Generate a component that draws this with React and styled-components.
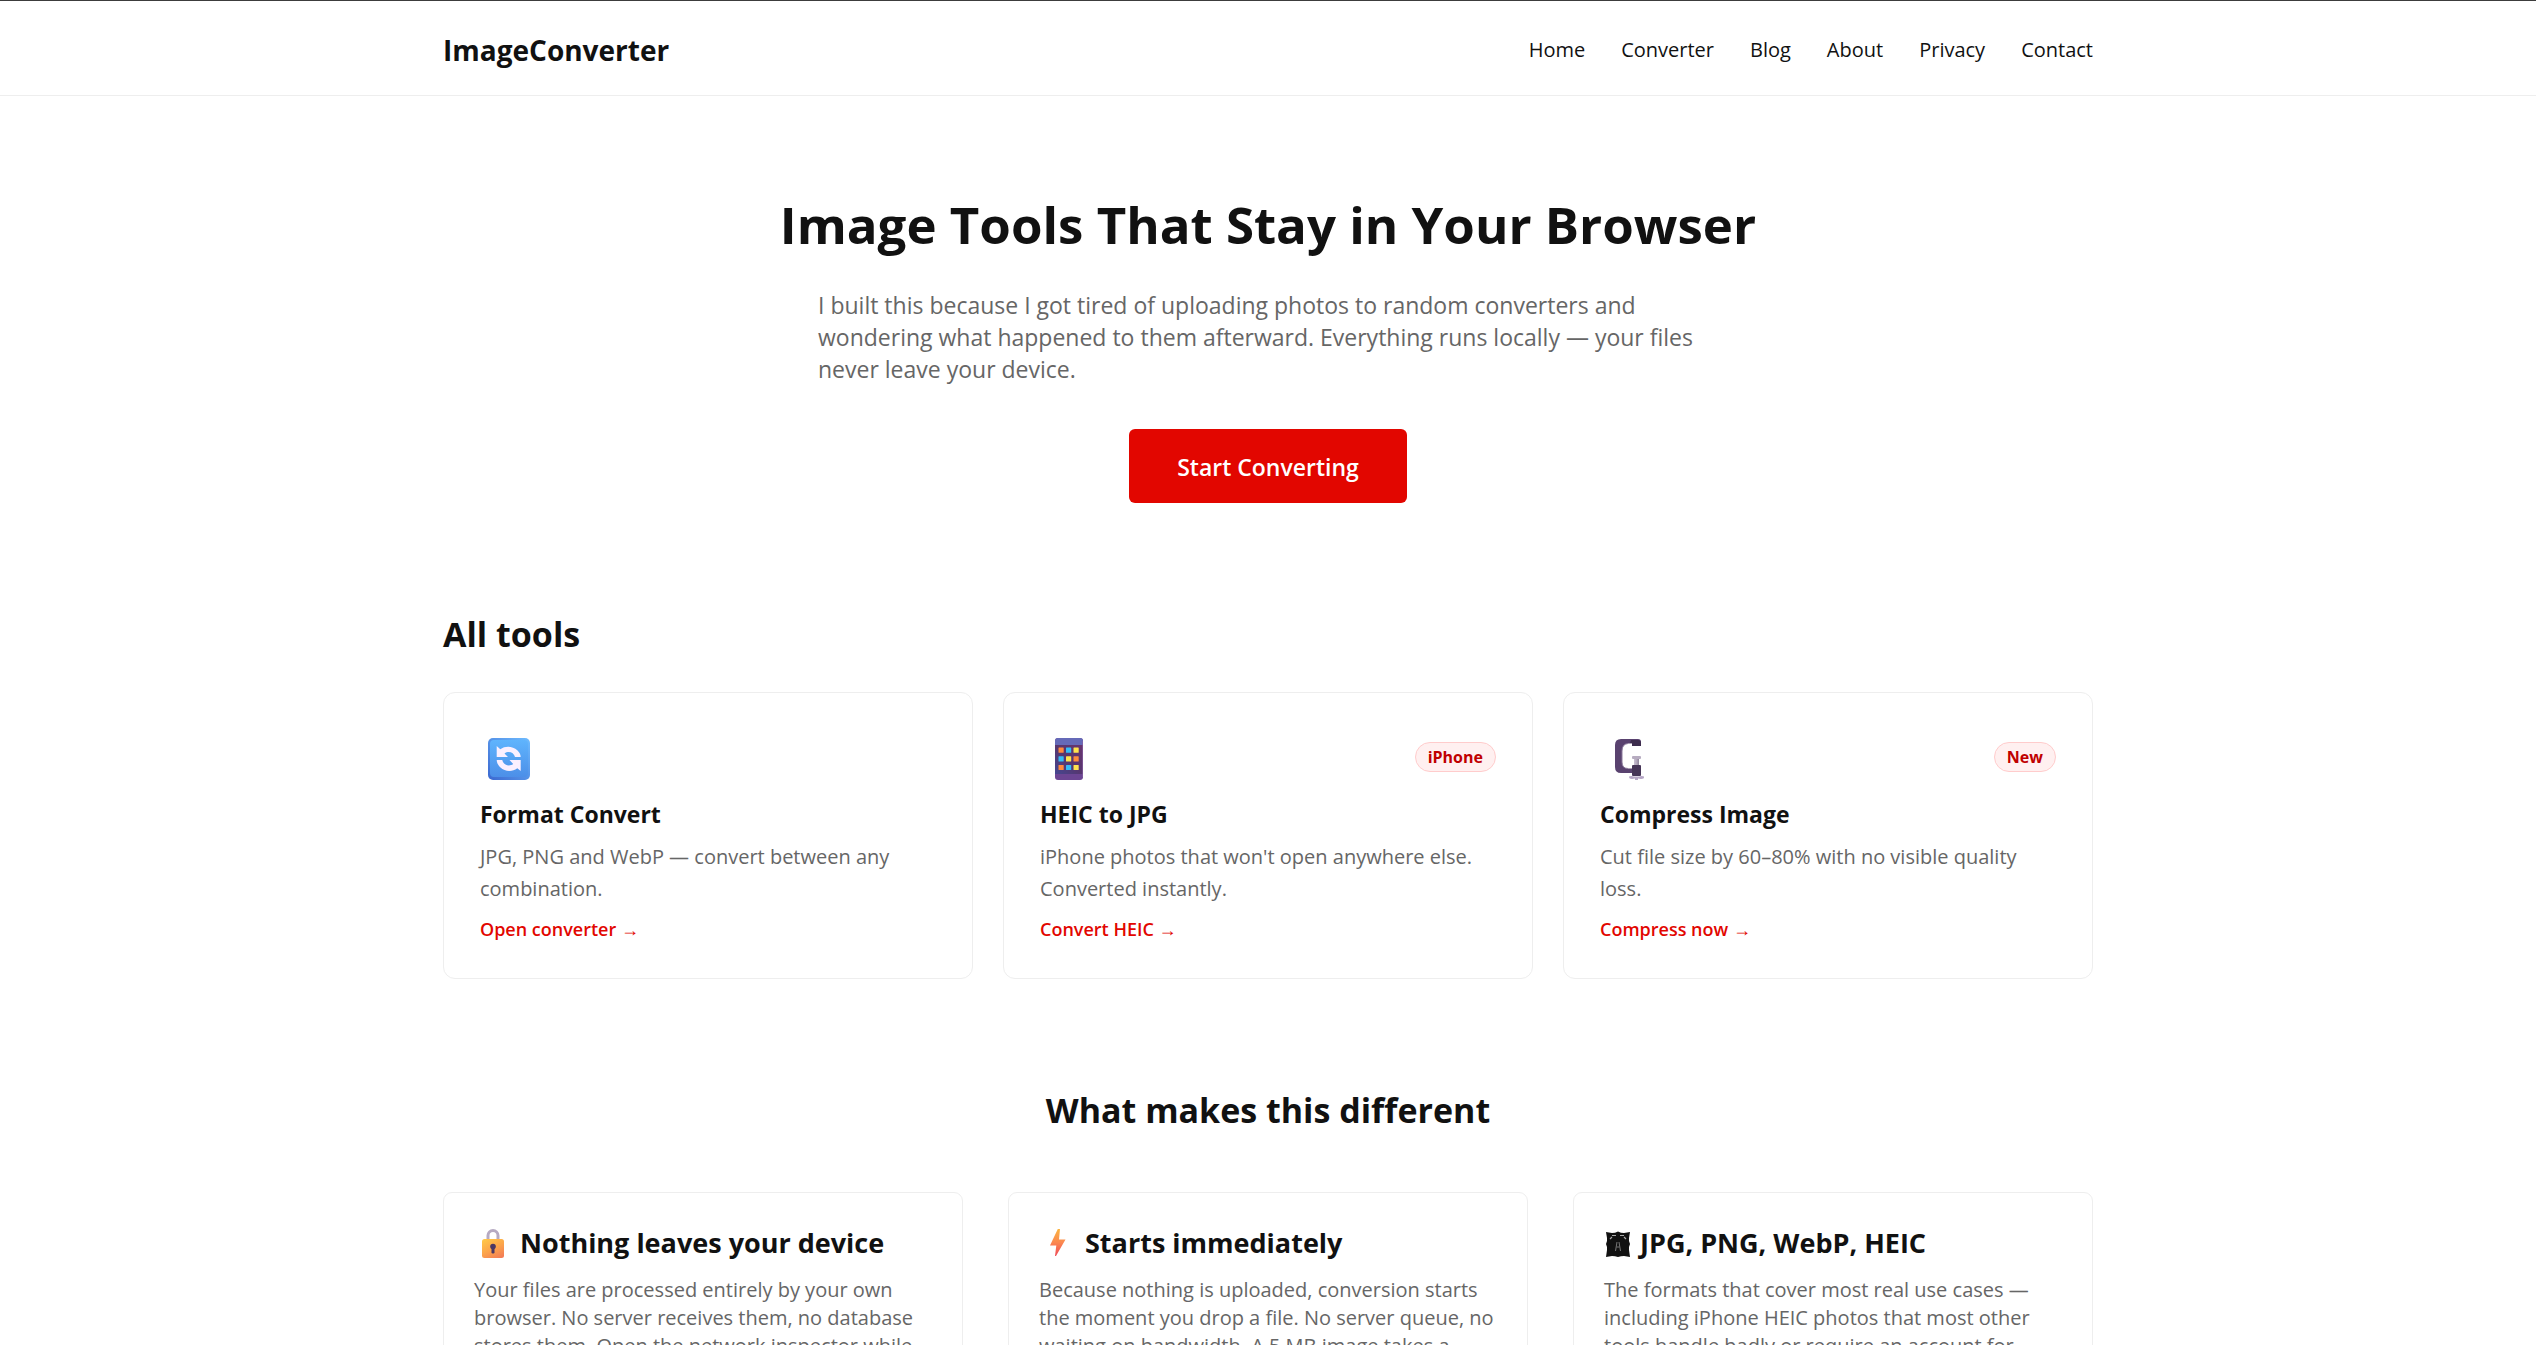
import React from "react";
import styled, { createGlobalStyle } from "styled-components";

const tools = [
  {
    icon: ConvertIcon,
    title: "Format Convert",
    text: "JPG, PNG and WebP — convert between any combination.",
    link: "Open converter →",
  },
  {
    icon: PhoneIcon,
    badge: "iPhone",
    title: "HEIC to JPG",
    text: "iPhone photos that won't open anywhere else. Converted instantly.",
    link: "Convert HEIC →",
  },
  {
    icon: ClampIcon,
    badge: "New",
    title: "Compress Image",
    text: "Cut file size by 60–80% with no visible quality loss.",
    link: "Compress now →",
  },
];

const features = [
  {
    icon: LockIcon,
    title: "Nothing leaves your device",
    text: "Your files are processed entirely by your own browser. No server receives them, no database stores them. Open the network inspector while",
  },
  {
    icon: BoltIcon,
    title: "Starts immediately",
    text: "Because nothing is uploaded, conversion starts the moment you drop a file. No server queue, no waiting on bandwidth. A 5 MB image takes a",
  },
  {
    icon: PictureIcon,
    title: "JPG, PNG, WebP, HEIC",
    text: "The formats that cover most real use cases — including iPhone HEIC photos that most other tools handle badly or require an account for",
  },
];

const links = ["Home", "Converter", "Blog", "About", "Privacy", "Contact"];

export default function App() {
  return (
    <>
      <GlobalStyle />
      <Header>
        <HeaderInner>
          <Logo href="#">ImageConverter</Logo>
          <Nav>
            {links.map((name) => (
              <NavLink key={name} href="#">
                {name}
              </NavLink>
            ))}
          </Nav>
        </HeaderInner>
      </Header>
      <main>
        <Hero>
          <h1>Image Tools That Stay in Your Browser</h1>
          <p>
            I built this because I got tired of uploading photos to random
            converters and wondering what happened to them afterward. Everything
            runs locally — your files never leave your device.
          </p>
          <HeroButton href="#">Start Converting</HeroButton>
        </Hero>
        <Section>
          <SectionTitle>All tools</SectionTitle>
          <ToolGrid>
            {tools.map(({ icon: Icon, badge, title, text, link }) => (
              <ToolCard key={title}>
                <ToolTop>
                  <Icon />
                  {badge && <Badge>{badge}</Badge>}
                </ToolTop>
                <ToolTitle>{title}</ToolTitle>
                <ToolText>{text}</ToolText>
                <ToolLink href="#">{link}</ToolLink>
              </ToolCard>
            ))}
          </ToolGrid>
        </Section>
        <Section>
          <SectionTitle $center>What makes this different</SectionTitle>
          <FeatureGrid>
            {features.map(({ icon: Icon, title, text }) => (
              <FeatureCard key={title}>
                <FeatureTitle>
                  <Icon />
                  {title}
                </FeatureTitle>
                <FeatureText>{text}</FeatureText>
              </FeatureCard>
            ))}
          </FeatureGrid>
        </Section>
      </main>
    </>
  );
}

function ConvertIcon() {
  return (
    <svg width="54" height="54" viewBox="0 0 54 54" aria-hidden="true">
      <defs>
        <linearGradient id="tile" x1="0" y1="0" x2="0" y2="1">
          <stop offset="0" stopColor="#5fb4fd" />
          <stop offset="1" stopColor="#4c8fe8" />
        </linearGradient>
        <linearGradient id="tileEdge" x1="1" y1="0" x2="0" y2="1">
          <stop offset="0" stopColor="#6ebcff" />
          <stop offset="1" stopColor="#3b68d0" />
        </linearGradient>
      </defs>
      <rect x="8" y="8" width="42" height="42" rx="5" fill="url(#tileEdge)" />
      <rect x="10" y="10" width="38" height="37" rx="4" fill="url(#tile)" />
      <path
        d="M16.7 16L20.3 19.2C25.5 15.3 33 16.2 37.3 20.2C39.6 22.4 40.7 24.6 40.7 27H35C34 22.5 28.5 20.5 24.5 23.5L28 27H16.7Z"
        fill="#fbf0ff"
      />
      <path
        d="M40.7 41L37.3 38.3C32 42.4 24.5 41.4 20.5 37.5C18 35.3 16.7 32.5 16.7 30H22.3C23.3 35 29 37 33.2 34L29.5 30H40.7Z"
        fill="#fbf0ff"
      />
    </svg>
  );
}

function PhoneIcon() {
  const colors = ["#ff8b3d", "#33bdf8", "#ffe44d"];
  const order = [0, 1, 2, 1, 2, 0, 0, 1, 2];
  return (
    <svg width="54" height="54" viewBox="0 0 54 54" aria-hidden="true">
      <defs>
        <linearGradient id="screen" x1="1" y1="0" x2="0" y2="1">
          <stop offset="0" stopColor="#69356f" />
          <stop offset="0.5" stopColor="#57366f" />
          <stop offset="1" stopColor="#454791" />
        </linearGradient>
      </defs>
      <rect x="15" y="8" width="28" height="42" rx="3" fill="#6c4593" />
      <path d="M15 15V11A3 3 0 0 1 18 8H40A3 3 0 0 1 43 11V15Z" fill="#656ab8" />
      <rect x="15" y="15" width="28" height="29" fill="url(#screen)" />
      <path d="M42.5 11V47" stroke="#8a63a5" opacity="0.6" />
      {order.map((c, i) => (
        <rect
          key={i}
          x={18.5 + (i % 3) * 7.5}
          y={17.5 + Math.floor(i / 3) * 8.7}
          width="5.2"
          height="5.2"
          rx="0.5"
          fill={colors[c]}
        />
      ))}
    </svg>
  );
}

function ClampIcon() {
  return (
    <svg width="54" height="54" viewBox="0 0 54 54" aria-hidden="true">
      <defs>
        <linearGradient id="screw" x1="0" y1="0" x2="1" y2="0">
          <stop offset="0" stopColor="#c9bfd2" />
          <stop offset="0.5" stopColor="#b3a8bd" />
          <stop offset="1" stopColor="#8f849a" />
        </linearGradient>
      </defs>
      <path
        d="M21 9H38Q41 9 41 12V16H32V13.5H28Q22 14 22 21V32Q22 38.500 28 38.500H33V43H21Q15 43 15 37V15Q15 9 21 9Z"
        fill="#59426f"
      />
      <path d="M28 13.5Q22 14 22 21V32Q22 38.5 28 38.5" fill="none" stroke="#8b799b" />
      <path d="M31 10H38Q41 10 41 13V16H32V13H30Z" fill="#3d2d4d" />
      <rect x="34" y="28" width="5" height="9" fill="url(#screw)" />
      <rect x="32" y="26" width="9" height="3" rx="1" fill="#b7acc0" />
      <rect x="32" y="35" width="9" height="11" rx="1" fill="#463557" />
      <path
        d="M29 46.5Q31 45.5 34 46.5H39Q42 45.5 44 46.5Q44.5 49 41 49L38 48.5V50H35V48.5L32 49Q29 49 29 46.5Z"
        fill="#b5a5c5"
      />
    </svg>
  );
}

function LockIcon() {
  return (
    <svg width="38" height="36" viewBox="0 0 38 36" aria-hidden="true">
      <defs>
        <linearGradient id="lock" x1="0.2" y1="0" x2="0.8" y2="1">
          <stop offset="0" stopColor="#ffc548" />
          <stop offset="0.5" stopColor="#fca54a" />
          <stop offset="1" stopColor="#f37d55" />
        </linearGradient>
      </defs>
      <path d="M14 15V10.5A5 5 0 0 1 24 10.5V15" fill="none" stroke="#b6aac2" strokeWidth="3" />
      <rect x="8" y="14" width="22" height="19" rx="2.5" fill="url(#lock)" />
      <circle cx="19" cy="21.5" r="2.8" fill="#4b3763" />
      <rect x="17.5" y="22" width="3" height="6.5" rx="1.2" fill="#4b3763" />
    </svg>
  );
}

function BoltIcon() {
  return (
    <svg width="38" height="36" viewBox="0 0 38 36" aria-hidden="true">
      <defs>
        <linearGradient id="bolt" x1="0" y1="0" x2="0" y2="1">
          <stop offset="0" stopColor="#fbb440" />
          <stop offset="0.5" stopColor="#fb8850" />
          <stop offset="1" stopColor="#ef4a58" />
        </linearGradient>
      </defs>
      <path d="M18.8 4H21L20 14.5H26.5L17 31H16L17.3 20.5H11Z" fill="url(#bolt)" />
    </svg>
  );
}

function PictureIcon() {
  return (
    <svg width="28" height="36" viewBox="0 0 28 36" aria-hidden="true">
      <path
        d="M2 7L8 8Q11 8 14 6.500Q17 8 20 8L26 7L25 13Q24.5 16 26 19Q24.5 22 25 25L26 32L20 31Q17 31 14 32Q11 31 8 31L2 32L3 25Q3.5 22 2 19Q3.5 16 3 13Z"
        fill="#111"
      />
      <path d="M8 10.500H12M16 10.500H20M6 14L8 12M22 14L20 12" stroke="#aaa" strokeWidth="1.2" />
      <path d="M13 17L11.5 26M15 17L16.5 26M12.5 22H15.500" stroke="#777" />
    </svg>
  );
}

const GlobalStyle = createGlobalStyle`
  * {
    box-sizing: border-box;
  }
  body {
    margin: 0;
    background: #fff;
    color: #111;
    font-family: "Open Sans", "Noto Sans", sans-serif;
    font-size: 20px;
  }
  h1, h2, h3, p {
    margin: 0;
  }
  a {
    color: inherit;
    text-decoration: none;
  }
`;

const Header = styled.header`
  border-top: 1px solid #3c3c3c;
  border-bottom: 1px solid #eee;
`;

const HeaderInner = styled.div`
  max-width: 1650px;
  margin: 0 auto;
  padding: 28px 0 24px;
  display: flex;
  justify-content: space-between;
  align-items: center;
`;

const Logo = styled.a`
  font-size: 28px;
  line-height: 42px;
  font-weight: 700;
`;

const Nav = styled.nav`
  display: flex;
  gap: 36px;
`;

const NavLink = styled.a`
  font-size: 20px;
  line-height: 28px;
`;

const Hero = styled.section`
  padding: 90px 0 60px;
  display: flex;
  flex-direction: column;
  align-items: center;

  h1 {
    font-size: 51px;
    line-height: 76px;
    text-align: center;
  }

  p {
    max-width: 900px;
    margin: 27px 0 44px;
    color: #666;
    font-size: 23px;
    line-height: 32px;
  }
`;

const HeroButton = styled.a`
  padding: 22px 48px 20px;
  border-radius: 6px;
  background: #e20600;
  color: #fff;
  font-size: 23px;
  line-height: 32px;
  font-weight: 600;
`;

const Section = styled.section`
  max-width: 1650px;
  margin: 0 auto;
  padding: 47px 0 60px;
`;

const SectionTitle = styled.h2`
  font-size: 34px;
  line-height: 48px;
  margin-bottom: ${(props) => (props.$center ? "58px" : "34px")};
  text-align: ${(props) => (props.$center ? "center" : "left")};
`;

const ToolGrid = styled.div`
  display: grid;
  grid-template-columns: repeat(3, 1fr);
  gap: 30px;
`;

const ToolCard = styled.article`
  padding: 37px 36px 36px;
  border: 1px solid #eee;
  border-radius: 12px;
`;

const ToolTop = styled.div`
  display: flex;
  justify-content: space-between;
  align-items: center;
  margin-bottom: 14px;
`;

const Badge = styled.span`
  padding: 2px 12px;
  border: 1px solid #fcc;
  border-radius: 15px;
  background: #fff0f0;
  color: #c00000;
  font-size: 16px;
  line-height: 24px;
  font-weight: 700;
`;

const ToolTitle = styled.h3`
  font-size: 23px;
  line-height: 32px;
`;

const ToolText = styled.p`
  margin: 11px 0;
  color: #666;
  font-size: 20px;
  line-height: 32px;
`;

const ToolLink = styled.a`
  display: block;
  color: #e20600;
  font-size: 18px;
  line-height: 26px;
  font-weight: 600;
`;

const FeatureGrid = styled.div`
  display: grid;
  grid-template-columns: repeat(3, 1fr);
  gap: 45px;
`;

const FeatureCard = styled.article`
  padding: 30px;
  border: 1px solid #eee;
  border-radius: 9px;
`;

const FeatureTitle = styled.h3`
  display: flex;
  align-items: center;
  gap: 8px;
  margin-bottom: 13px;
  font-size: 27px;
  line-height: 40px;
`;

const FeatureText = styled.p`
  color: #666;
  font-size: 20px;
  line-height: 28px;
`;
